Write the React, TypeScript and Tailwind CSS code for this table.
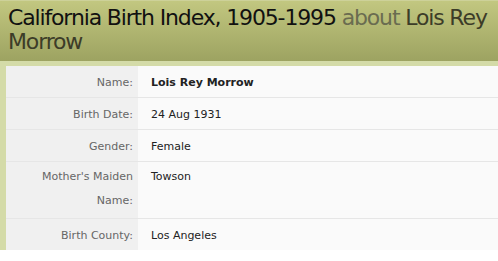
const rows: { label: string; value: string; bold?: boolean; tall?: boolean }[] = [
  { label: "Name:", value: "Lois Rey Morrow", bold: true },
  { label: "Birth Date:", value: "24 Aug 1931" },
  { label: "Gender:", value: "Female" },
  { label: "Mother's Maiden Name:", value: "Towson", tall: true },
  { label: "Birth County:", value: "Los Angeles" },
];

export default function App() {
  return (
    <div className="w-[498px] h-[261px] bg-white font-['DejaVu_Sans',sans-serif]">
      <div className="border-t border-[#cdd199] bg-gradient-to-b from-[#c2c780] to-[#9da361] pl-2 pr-1 pt-[5px] h-[61px] text-[22px] leading-[24px] text-[#111] tracking-[-1.15px]">
        California Birth Index, 1905-1995 <span className="text-[#6a6c50]">about</span>{" "}
        <span className="text-[#3c3c28]">Lois Rey Morrow</span>
      </div>
      <div className="bg-[#d4dba8] pt-[5px] pl-[6px]">
        <div className="bg-[#fafafa]">
          {rows.map((r, i) => (
            <div key={i} className="flex border-b border-[#e6e6e6] last:border-b-0 text-[11px]">
              <div
                className={`w-[132px] shrink-0 bg-[#f0f0f0] text-right text-[#666] pr-[5px] pl-2 ${
                  r.tall ? "pt-[3px] pb-[5px] leading-[24px]" : "pt-[10px] pb-[8px] leading-[13px]"
                }`}
              >
                {r.label}
              </div>
              <div
                className={`pl-[13px] text-[#222] ${r.bold ? "font-bold" : ""} ${
                  r.tall ? "pt-[3px] leading-[24px]" : "pt-[10px] pb-[8px] leading-[13px]"
                }`}
              >
                {r.value}
              </div>
            </div>
          ))}
        </div>
      </div>
    </div>
  );
}
